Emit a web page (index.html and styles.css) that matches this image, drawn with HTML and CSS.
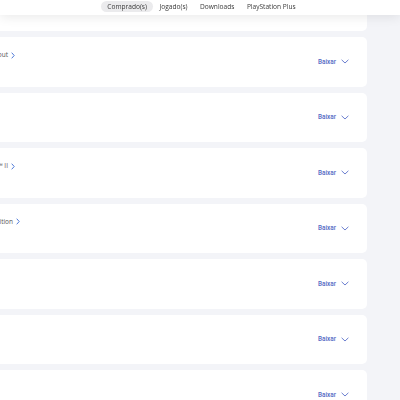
FILE: index.html
```html
<!DOCTYPE html>
<html lang="pt">
<head>
<meta charset="utf-8">
<title>Biblioteca</title>
<link rel="stylesheet" href="styles.css">
</head>
<body>
<header class="topbar">
  <nav class="tabs">
    <span class="tab active">Comprado(s)</span>
    <span class="tab">Jogado(s)</span>
    <span class="tab">Downloads</span>
    <span class="tab">PlayStation Plus</span>
  </nav>
</header>
<main class="list">
  <div class="card"><div class="title"></div><div class="dl">Baixar <svg class="down" viewBox="0 0 8 5"><path d="M0.6 0.8 L4 4 L7.4 0.8"/></svg></div></div>
  <div class="card"><div class="title"><span class="name">Fallout</span><svg class="more" viewBox="0 0 4 7"><path d="M0.7 0.7 L3.2 3.5 L0.7 6.3"/></svg></div><div class="dl">Baixar <svg class="down" viewBox="0 0 8 5"><path d="M0.6 0.8 L4 4 L7.4 0.8"/></svg></div></div>
  <div class="card"><div class="title"></div><div class="dl">Baixar <svg class="down" viewBox="0 0 8 5"><path d="M0.6 0.8 L4 4 L7.4 0.8"/></svg></div></div>
  <div class="card"><div class="title"><span class="name">Marvel's Spider-Man™ II</span><svg class="more" viewBox="0 0 4 7"><path d="M0.7 0.7 L3.2 3.5 L0.7 6.3"/></svg></div><div class="dl">Baixar <svg class="down" viewBox="0 0 8 5"><path d="M0.6 0.8 L4 4 L7.4 0.8"/></svg></div></div>
  <div class="card"><div class="title shift"><span class="name">Deluxe Edition</span><svg class="more" viewBox="0 0 4 7"><path d="M0.7 0.7 L3.2 3.5 L0.7 6.3"/></svg></div><div class="dl">Baixar <svg class="down" viewBox="0 0 8 5"><path d="M0.6 0.8 L4 4 L7.4 0.8"/></svg></div></div>
  <div class="card"><div class="title"></div><div class="dl">Baixar <svg class="down" viewBox="0 0 8 5"><path d="M0.6 0.8 L4 4 L7.4 0.8"/></svg></div></div>
  <div class="card"><div class="title"></div><div class="dl">Baixar <svg class="down" viewBox="0 0 8 5"><path d="M0.6 0.8 L4 4 L7.4 0.8"/></svg></div></div>
  <div class="card"><div class="title"></div><div class="dl">Baixar <svg class="down" viewBox="0 0 8 5"><path d="M0.6 0.8 L4 4 L7.4 0.8"/></svg></div></div>
</main>
</body>
</html>
```
FILE: styles.css
```css
html, body {
  margin: 0;
  padding: 0;
  background: #f3f4f8;
  overflow: hidden;
  height: 400px;
  font-family: "Open Sans", "Noto Sans", sans-serif;
}

.topbar {
  position: fixed;
  top: 0;
  left: 0;
  right: 0;
  height: 15px;
  background: #ffffff;
  box-shadow: 0 2px 12px rgba(0, 0, 0, 0.09);
  display: flex;
  justify-content: center;
  align-items: center;
  z-index: 2;
}

.tabs {
  display: flex;
  align-items: center;
  gap: 0.5px;
  margin-top: -3px;
  margin-left: 3px;
}

.tab {
  font-size: 6.6px;
  color: #3a3a3a;
  padding: 2px 6px;
  border-radius: 6px;
  line-height: 7px;
}

.tab.active {
  background: #ebebed;
}

.list {
  display: flex;
  flex-direction: column;
  gap: 6px;
  margin-top: -18.5px;
  margin-left: -40px;
  width: 407px;
}

.card {
  height: 49.5px;
  background: #ffffff;
  border-radius: 5px;
  display: flex;
  align-items: center;
  justify-content: space-between;
  padding: 0 18px 0 0;
  box-sizing: border-box;
  position: relative;
}

.title {
  align-self: flex-start;
  margin-top: 14px;
  width: 55px;
  flex-shrink: 0;
  display: flex;
  justify-content: flex-end;
  align-items: center;
  gap: 3px;
  white-space: nowrap;
}

.title.shift {
  width: 60px;
}

.name {
  flex-shrink: 0;
  font-size: 6.5px;
  color: #555555;
  line-height: 8px;
}

.more {
  flex-shrink: 0;
  width: 4px;
  height: 7px;
  fill: none;
  stroke: #4f7ad8;
  stroke-width: 1;
}

.dl {
  display: flex;
  align-items: center;
  gap: 5px;
  font-family: Roboto, "Open Sans", sans-serif;
  font-size: 6.4px;
  font-weight: 500;
  color: #5468c4;
}

.down {
  width: 8px;
  height: 5px;
  fill: none;
  stroke: #6b7fcf;
  stroke-width: 1;
}
```
